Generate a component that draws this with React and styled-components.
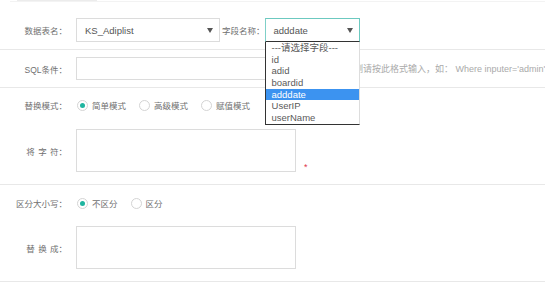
import React from "react";
import styled, { createGlobalStyle } from "styled-components";

const GlobalStyle = createGlobalStyle`
  body {
    margin: 0;
    background: #fff;
    overflow: hidden;
    font-family: "Liberation Sans", "Noto Sans CJK SC", sans-serif;
  }
`;

const fields = ["---请选择字段---", "id", "adid", "boardid", "adddate", "UserIP", "userName"];

export default () => {
  return (
    <>
      <GlobalStyle />
      <Page>
        <TopStrip>
          <TopTab />
        </TopStrip>

        <Section top={16} bottom={7}>
          <Field>
            <Label>数据表名：</Label>
            <Select width={144}>
              <SelectText>KS_Adiplist</SelectText>
              <Arrow />
            </Select>
            <InlineLabel>字段名称：</InlineLabel>
            <SelectWrap>
              <Select width={95} focused>
                <SelectText>adddate</SelectText>
                <Arrow />
              </Select>
              <DropList>
                {fields.map((f) => (
                  <DropItem key={f} active={f === "adddate"}>
                    {f}
                  </DropItem>
                ))}
              </DropList>
            </SelectWrap>
          </Field>
        </Section>

        <Section top={7} bottom={7}>
          <Field>
            <Label>SQL条件：</Label>
            <Input />
            <Hint>如有条件需检测请按此格式输入，如： Where inputer='admin'</Hint>
          </Field>
        </Section>

        <Section top={7} bottom={12}>
          <Field>
            <Label>替换模式：</Label>
            <RadioGroup>
              <Radio checked>简单模式</Radio>
              <Radio>高级模式</Radio>
              <Radio>赋值模式</Radio>
            </RadioGroup>
          </Field>
          <Field gap={14}>
            <Label spaced>将 字 符：</Label>
            <TextArea />
            <Required>*</Required>
          </Field>
        </Section>

        <Section top={8} bottom={12}>
          <Field>
            <Label>区分大小写：</Label>
            <RadioGroup>
              <Radio checked>不区分</Radio>
              <Radio>区分</Radio>
            </RadioGroup>
          </Field>
          <Field gap={13}>
            <Label spaced>替 换 成：</Label>
            <TextArea />
          </Field>
        </Section>
      </Page>
    </>
  );
};

const Radio = ({ checked, children }) => (
  <RadioItem>
    <RadioCircle checked={checked} />
    <RadioText>{children}</RadioText>
  </RadioItem>
);

const Page = styled.div`
  width: 545px;
  height: 284px;
  font-size: 8.5px;
  color: #707070;
`;

const TopStrip = styled.div`
  height: 1px;
  margin-left: 10px;
  border-bottom: 1px solid #f3f3f3;
  display: flex;
`;

const TopTab = styled.div`
  width: 80px;
  margin-left: 7px;
  height: 1px;
  background: #ececec;
`;

const Section = styled.div`
  padding-top: ${(p) => p.top}px;
  padding-bottom: ${(p) => p.bottom}px;
  border-bottom: 1px solid #e8e8e8;
  display: flex;
  flex-direction: column;
`;

const Field = styled.div`
  display: flex;
  align-items: center;
  margin-top: ${(p) => p.gap || 0}px;
`;

const Label = styled.div`
  width: 67px;
  flex-shrink: 0;
  text-align: right;
  margin-right: 9px;
  color: #707070;
  word-spacing: ${(p) => (p.spaced ? "1px" : "0")};
  white-space: pre;
`;

const InlineLabel = styled.div`
  margin: 0 0 0 2px;
  color: #707070;
  white-space: nowrap;
`;

const Select = styled.div`
  box-sizing: border-box;
  width: ${(p) => p.width}px;
  height: 24px;
  display: flex;
  align-items: center;
  justify-content: space-between;
  padding: 0 6px 0 8px;
  border: 1px solid ${(p) => (p.focused ? "#6cc9c0" : "#dcdcdc")};
  border-bottom-color: ${(p) => (p.focused ? "#333" : "#dcdcdc")};
  border-left-color: ${(p) => (p.focused ? "#7fd0c8" : "#dcdcdc")};
  background: #fff;
  font-size: 9.5px;
  color: #555;
`;

const SelectText = styled.span`
  font-family: "Liberation Sans", Arial, sans-serif;
`;

const Arrow = styled.span`
  width: 0;
  height: 0;
  border-left: 3px solid transparent;
  border-right: 3px solid transparent;
  border-top: 5px solid #555;
`;

const SelectWrap = styled.div`
  position: relative;
`;

const DropList = styled.div`
  position: absolute;
  top: 24px;
  left: 0;
  box-sizing: border-box;
  width: 95px;
  background: #fff;
  border-left: 1px solid #333;
  border-bottom: 1px solid #333;
  border-right: 1px solid #ddd;
  z-index: 2;
`;

const DropItem = styled.div`
  height: 11.7px;
  line-height: 11.7px;
  padding-left: 6px;
  font-size: 9.5px;
  color: ${(p) => (p.active ? "#fff" : "#5a5a5a")};
  background: ${(p) => (p.active ? "#3c93f0" : "transparent")};
  white-space: nowrap;
`;

const Input = styled.div`
  box-sizing: border-box;
  width: 220px;
  height: 23px;
  border: 1px solid #dcdcdc;
  flex-shrink: 0;
`;

const Hint = styled.div`
  margin-left: 4px;
  color: #aaa;
  font-size: 9px;
  white-space: nowrap;
`;

const RadioGroup = styled.div`
  display: flex;
  align-items: center;
  height: 20px;
  gap: 12px;
`;

const RadioItem = styled.div`
  display: flex;
  align-items: center;
  gap: 4px;
`;

const RadioCircle = styled.span`
  box-sizing: border-box;
  width: 11px;
  height: 11px;
  margin-left: 1px;
  border-radius: 50%;
  border: 1px solid #d4d4d4;
  display: flex;
  align-items: center;
  justify-content: center;
  &::after {
    content: "";
    width: 5px;
    height: 5px;
    border-radius: 50%;
    background: ${(p) => (p.checked ? "#1fb5a0" : "transparent")};
  }
`;

const RadioText = styled.span`
  color: #707070;
`;

const TextArea = styled.div`
  box-sizing: border-box;
  width: 220px;
  height: 43px;
  border: 1px solid #dcdcdc;
  flex-shrink: 0;
`;

const Required = styled.span`
  align-self: flex-end;
  margin-left: 8px;
  color: #e0344b;
  font-size: 9px;
`;
